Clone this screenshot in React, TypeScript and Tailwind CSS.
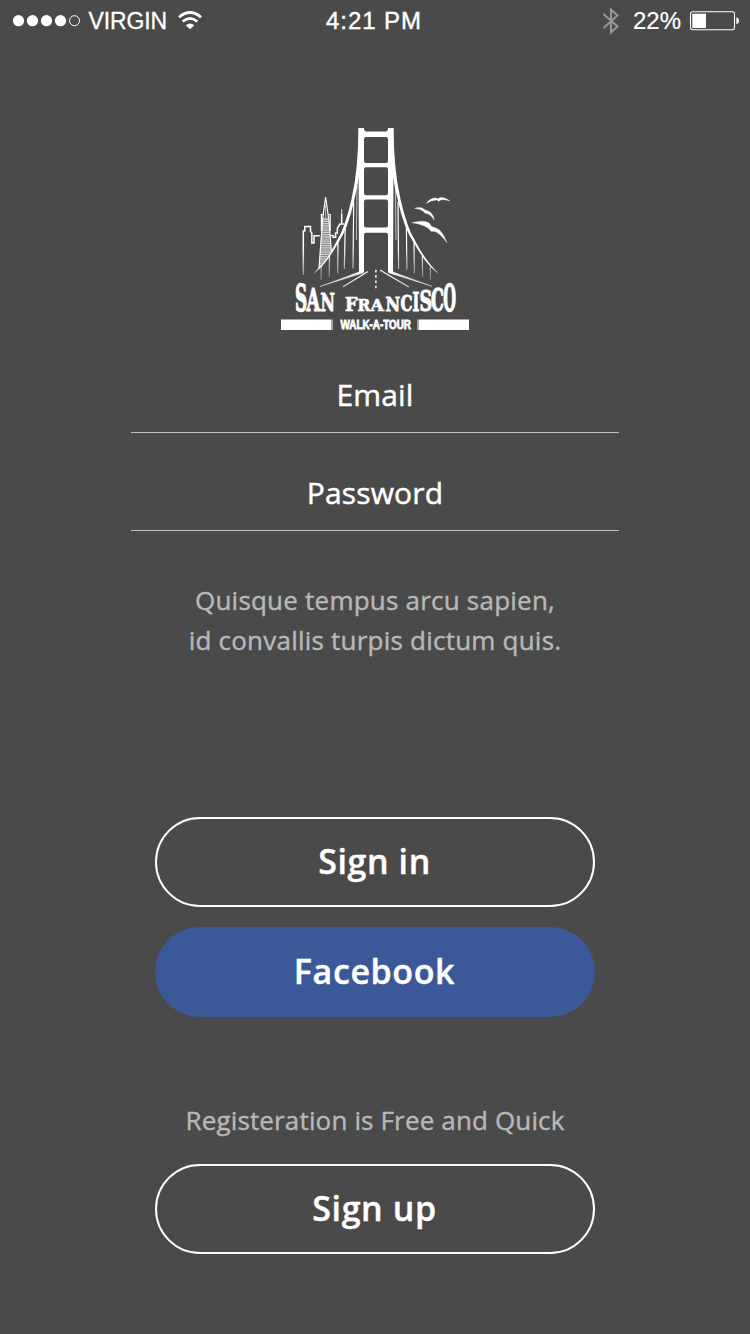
import React from "react";

const SANS = "font-['Liberation_Sans',sans-serif]";

type Glyph = { c: string; x: number; w: number; top: number; bottom: number };

// Arched wordmark: every letter is stretched to its own box.
const WORDMARK: Glyph[] = [
  { c: "S", x: 295, w: 11.5, top: 284.3, bottom: 311 },
  { c: "A", x: 306.4, w: 13.6, top: 288.3, bottom: 311 },
  { c: "N", x: 320.4, w: 14.4, top: 293, bottom: 311 },
  { c: "F", x: 344.9, w: 12.3, top: 297.5, bottom: 311 },
  { c: "R", x: 357.4, w: 13, top: 298.3, bottom: 311 },
  { c: "A", x: 370.6, w: 13.3, top: 298.3, bottom: 311 },
  { c: "N", x: 385.4, w: 14.7, top: 297.3, bottom: 311 },
  { c: "C", x: 400.6, w: 12, top: 295.3, bottom: 311 },
  { c: "I", x: 412.5, w: 6.8, top: 292.5, bottom: 311 },
  { c: "S", x: 419.4, w: 12, top: 290.3, bottom: 311 },
  { c: "C", x: 431, w: 12.8, top: 287.6, bottom: 311 },
  { c: "O", x: 443.3, w: 12.8, top: 284.3, bottom: 311 },
];

const ADVANCE: Record<string, number> = {
  S: 6.85, A: 7.76, N: 9.14, F: 7.1, R: 8.43, C: 7.96, I: 4.68, O: 8.71,
};

const CABLE =
  "M358.3 128L358 147L356.8 165L354.6 183L351.3 200L348.3 212L344.2 225L340.8 233.5L336.3 241.7L331.8 250L326.6 258L320.5 266L313 274.3L321.4 267L327.8 259.3L333.3 251L338.2 243L343 234.5L346.8 226L351 213L354.3 200L357.4 186L360 170Z";

function Logo() {
  return (
    <svg width="200" height="215" viewBox="275 120 200 215" fill="none" stroke="#fff">
      <defs>
        <linearGradient id="fade" gradientUnits="userSpaceOnUse" x1="0" y1="235" x2="0" y2="280">
          <stop offset="0.3" stopColor="#fff" />
          <stop offset="1" stopColor="#fff" stopOpacity="0.25" />
        </linearGradient>
        <linearGradient id="roadL" gradientUnits="userSpaceOnUse" x1="362" y1="0" x2="320" y2="0">
          <stop offset="0" stopColor="#fff" />
          <stop offset="1" stopColor="#fff" stopOpacity="0.4" />
        </linearGradient>
        <linearGradient id="roadR" gradientUnits="userSpaceOnUse" x1="390" y1="0" x2="432" y2="0">
          <stop offset="0" stopColor="#fff" />
          <stop offset="1" stopColor="#fff" stopOpacity="0.4" />
        </linearGradient>
      </defs>

      {/* tower */}
      <g fill="#fff" stroke="none">
        <path
          fillRule="evenodd"
          d="M358.3 128H364Q364 131.5 366.5 131.5H385.5Q388 131.5 388 128H393.7L393 272H388V235Q388 232.7 385.8 232.7H366.2Q364 232.7 364 235V272H359ZM366 137Q364 137 364 139V161Q364 163 366 163H386Q388 163 388 161V139Q388 137 386 137ZM366 167.2Q364 167.2 364 169.2V193.3Q364 195.3 366 195.3H386Q388 195.3 388 193.3V169.2Q388 167.2 386 167.2ZM366 199.5Q364 199.5 364 201.5V225.6Q364 227.6 366 227.6H386Q388 227.6 388 225.6V201.5Q388 199.5 386 199.5Z"
        />
        {/* main cables */}
        <path d={CABLE} />
        <path d={CABLE} transform="translate(752 0) scale(-1 1)" />
      </g>

      {/* suspenders */}
      <g stroke="url(#fade)" strokeWidth="1.2">
        <path d="M353.7 202L353 268.5M345.2 228L344.3 269M338 242L337.6 273.5M329.5 256L329.2 277M321.3 266L321 280" />
        <path d="M398 202L398.6 269M406.4 228L406.9 269.5M414 243L414.4 273.5M422.3 256L422.6 277M430.3 267L430.5 280" />
      </g>
      <path d="M357 186L356.4 240M395.4 186L396 240" strokeWidth=".8" opacity=".8" />

      {/* roadway */}
      <path d="M363.5 270.5L320 286.5L363.5 272.6Z" fill="url(#roadL)" stroke="url(#roadL)" strokeWidth=".8" />
      <path d="M388.5 270.5L432 286.3L388.5 272.6Z" fill="url(#roadR)" stroke="url(#roadR)" strokeWidth=".8" />
      <path d="M368 271.5L343 286.7" stroke="url(#roadL)" strokeWidth="1.1" />
      <path d="M380 270L408.8 287" stroke="url(#roadR)" strokeWidth="1.1" />
      <path d="M375.9 269.8V289" strokeWidth="1.7" strokeDasharray="2.6 2.7" opacity=".85" />

      {/* skyline */}
      <path d="M303.3 275V231H304.8V226.5H310.5V231.5L311.8 233V243H314V235.7H319.8" stroke="url(#fade)" strokeWidth="1.5" />
      <path d="M330.5 235.5H333V237.2H335.6V233H337.3V228.5L340 224H344.5M341.7 223V214" strokeWidth="1.5" />
      <path d="M341.7 214V209" strokeWidth=".8" />
      <path d="M321.4 231V214.5H323M328.8 214.5H330.2V231" strokeWidth="1.2" />
      <path d="M325.6 197L328.4 217M325.6 197L322.9 217" strokeWidth="1.2" />
      <path d="M325.6 205V217" strokeWidth="1" opacity=".6" />
      <path d="M322.8 217L318.9 269M328.6 217L331.4 251" strokeWidth="1.1" />
      <path d="M322.8 217H328.6L331.4 251L319 268Z" fill="#fff" stroke="none" opacity=".3" />
      <g strokeWidth="1.2" opacity=".65">
        <path d="M322 219.2H329M321.8 221.4H329.2M321.8 223.6H329.4M321.8 225.8H329.5M321.8 228H329.7M321.6 230.2H329.8M321.4 232.4H330M321.2 234.6H330.1M321 236.8H330.2M320.8 239H330.4M320.6 241.2H330.5M320.4 243.4H330.6M320.2 245.6H330.8M320.1 247.8H330.9M319.9 250H331M319.8 252.2H330M319.6 254.4H328.6M319.5 256.6H327M319.4 258.8H325.6M319.2 261H324M319.1 263.2H322.5M319 265.4H321" />
      </g>

      {/* birds */}
      <g fill="#fff" stroke="#fff" strokeWidth=".3">
        <path d="M426.3 203.5Q430.5 197.6 435.5 198L438 198.8L440.2 197.6Q444 196.6 450 201Q444.5 199.4 441 199.8L438.6 201.4L437 200Q431.5 199.8 426.3 203.5Z" />
        <path d="M414.5 208.3Q421.5 206 424.7 209.8L427.5 210.7Q433 212.6 434.3 220Q430.5 214.4 427 213.6L425 213.3L423.6 211.6Q420.5 208.9 414.5 208.3Z" />
        <path d="M411.8 222.7Q424 219.5 429.2 223L431.6 226.6L436.5 228.2Q442.5 230.5 447 242.8Q440.5 234 435.2 231.6L431 231.2L429 228.8Q424.5 224.6 411.8 222.7Z" />
      </g>

      {/* wordmark */}
      <g fill="#fff" stroke="#fff" strokeWidth=".4">
        {WORDMARK.map((g, i) => (
          <text
            key={i}
            fontFamily="'DejaVu Serif', serif"
            fontWeight="700"
            fontSize="10"
            transform={`translate(${g.x} ${g.bottom}) scale(${g.w / ADVANCE[g.c]} ${(g.bottom - g.top) / 7.29})`}
          >
            {g.c}
          </text>
        ))}
      </g>

      {/* banner */}
      <g fill="#fff" stroke="none">
        <path d="M281 319.5H331V330H281ZM419 319.5H469V330H419Z" />
        <path d="M331 319.5H333V330H331ZM417 319.5H419V330H417Z" opacity=".5" />
        <text
          x="340.5"
          y="328.6"
          fontFamily="'Liberation Sans', sans-serif"
          fontWeight="700"
          fontSize="12.2"
          textLength="70.5"
          lengthAdjust="spacingAndGlyphs"
          stroke="#fff"
          strokeWidth=".8"
        >
          WALK-A-TOUR
        </text>
      </g>
    </svg>
  );
}

function StatusBar() {
  return (
    <header className={`grid h-[41px] grid-cols-[1fr_auto_1fr] items-center text-[24px] leading-[41px] ${SANS}`}>
      <div className="flex items-center pl-[13px]">
        <svg width="68" height="12" viewBox="0 0 68 12" fill="#fff">
          <circle cx="5.5" cy="5.7" r="5.6" />
          <circle cx="19.5" cy="5.7" r="5.6" />
          <circle cx="33.5" cy="5.7" r="5.6" />
          <circle cx="47.5" cy="5.7" r="5.6" />
          <circle cx="61.5" cy="5.7" r="5" fill="none" stroke="#fff" />
        </svg>
        <span className="ml-[7.5px] w-[79px] pt-[2px] text-[23px] leading-[39px] tracking-[-0.1px] [-webkit-text-stroke:0.3px_white]">VIRGIN</span>
        <svg className="ml-[10px]" width="24" height="19" viewBox="0 0 24 19" fill="none" stroke="#fff">
          <path d="M1 6.2Q12 -3.2 23 6.2" strokeWidth="2.8" />
          <path d="M4.7 10.5Q12 4.2 19.3 10.5" strokeWidth="2.7" />
          <path d="M7.8 14.2Q12 10.6 16.2 14.2L12 18.2Z" fill="#fff" stroke="none" />
        </svg>
      </div>
      <span className="mr-[2px] tracking-[0.95px] [-webkit-text-stroke:0.4px_white]">4:21 PM</span>
      <div className="flex items-center justify-end pr-[11px]">
        <svg width="18" height="28" viewBox="0 0 18 28" fill="none" stroke="#999" strokeWidth="2">
          <path d="M1.5 7L15.5 19.5L9 25.5V2.5L15.5 8.5L1.5 21" />
        </svg>
        <span className="ml-[13px] w-[48px] whitespace-nowrap [-webkit-text-stroke:0.2px_white]">22%</span>
        <svg className="ml-[8px]" width="50" height="20" viewBox="0 0 50 20" fill="none">
          <rect x="1.5" y=".8" width="44" height="18" rx="2.2" stroke="#fff" strokeWidth="1.1" />
          <rect x="3.3" y="2.7" width="13.7" height="14.3" fill="#fff" />
          <path d="M47.4 6.3C49 6.8 50 7.8 50 9.8S49 12.8 47.4 13.3Z" fill="#fff" />
        </svg>
      </div>
    </header>
  );
}

function Field({ label }: { label: string }) {
  return (
    <div className="flex h-[98px] w-[488px] items-end justify-center border-b border-[#c0c0c0] pb-[16px] text-[30px] leading-[42px] tracking-[0.15px] [-webkit-text-stroke:0.45px_white]">
      {label}
    </div>
  );
}

function PillButton({ children, className }: { children: string; className: string }) {
  return (
    <button className={`flex h-[90px] w-[440px] items-center justify-center rounded-full pr-[1px] pb-[2px] text-[34px] font-semibold tracking-[0.6px] [-webkit-text-stroke:0.4px_white] ${className}`}>
      {children}
    </button>
  );
}

const NOTE = "text-center text-[26px] leading-[40px] text-[#b8b8b8] [-webkit-text-stroke:0.4px_#b8b8b8]";

export default function App() {
  return (
    <main className="flex h-[1334px] w-[750px] flex-col bg-[#4a4a4a] font-['Open_Sans',sans-serif] text-white">
      <StatusBar />
      <div className="flex flex-col items-center pt-[79px]">
        <Logo />
        <div className="flex flex-col items-center">
          <Field label="Email" />
          <Field label="Password" />
        </div>
        <p className={`mt-[49px] tracking-[0.22px] ${NOTE}`}>
          Quisque tempus arcu sapien,
          <br />
          id convallis turpis dictum quis.
        </p>
        <div className="mt-[157px] flex flex-col gap-[20px]">
          <PillButton className="border-2 border-white">Sign in</PillButton>
          <PillButton className="bg-[#3b5998]">Facebook</PillButton>
        </div>
        <p className={`mt-[83px] tracking-[0.15px] ${NOTE}`}>Registeration is Free and Quick</p>
        <PillButton className="mt-[24px] border-2 border-white">Sign up</PillButton>
      </div>
    </main>
  );
}
